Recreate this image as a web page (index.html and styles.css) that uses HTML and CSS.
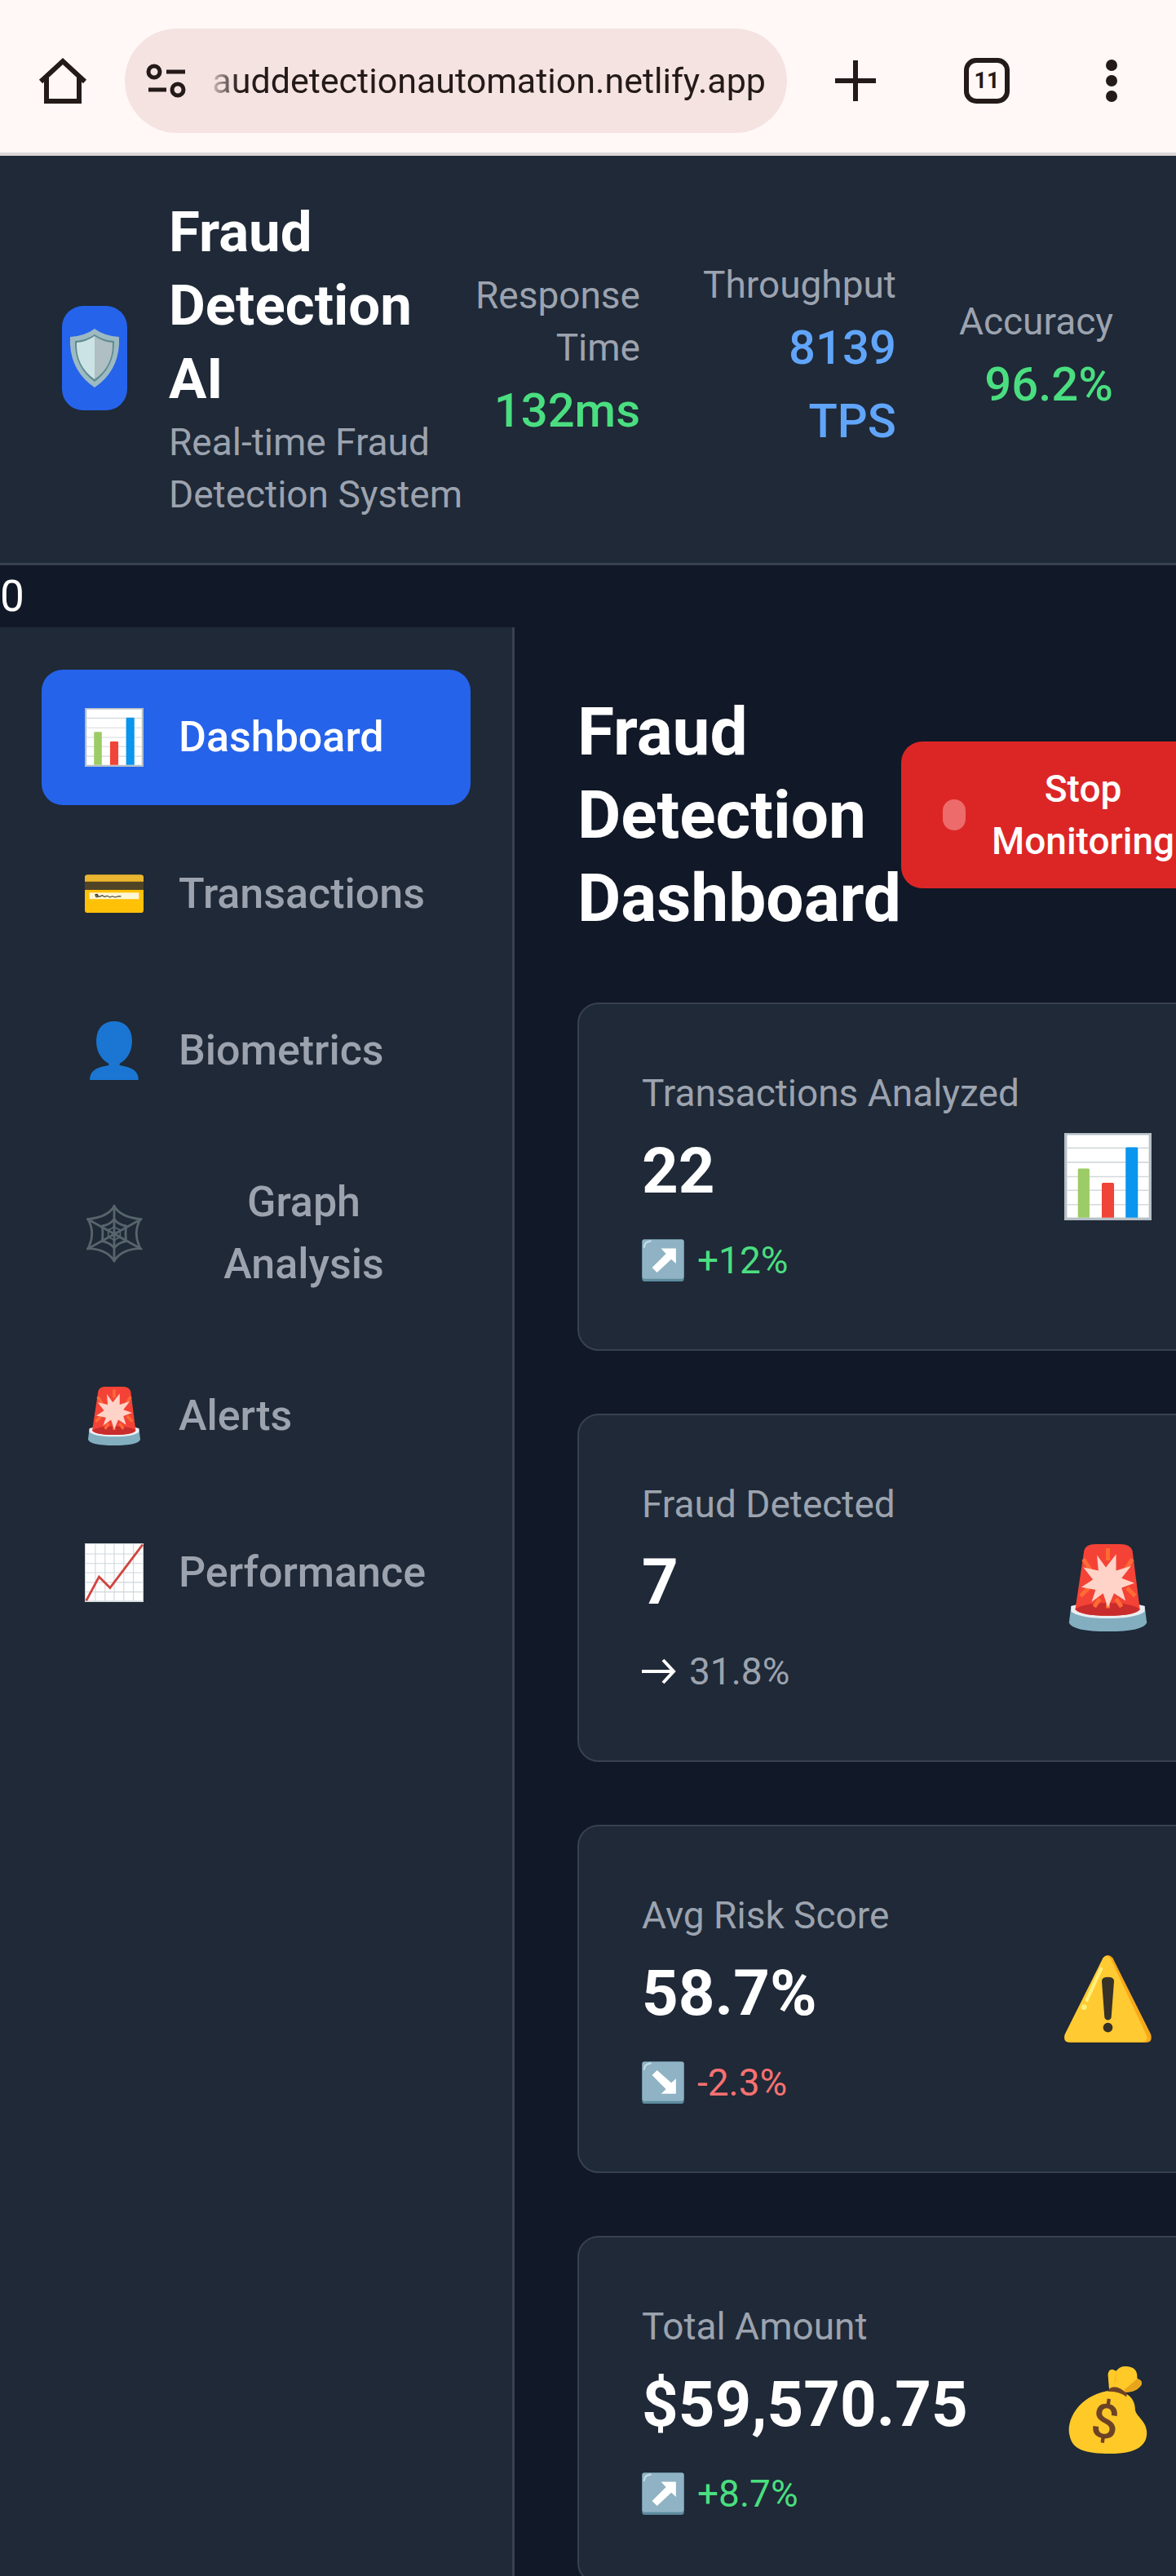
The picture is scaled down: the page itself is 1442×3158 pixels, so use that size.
FILE: index.html
```html
<!DOCTYPE html>
<html lang="en">
<head>
  <meta charset="UTF-8">
  <meta name="viewport" content="width=device-width, initial-scale=1.0">
  <title>Fraud Detection AI</title>
  <link rel="stylesheet" href="styles.css">
</head>
<body>
  <!-- Icon sprites -->
  <svg class="sprites" aria-hidden="true">
    <symbol id="i-bars" viewBox="0 0 128 128">
      <rect width="128" height="128" fill="#b4bfc6"/>
      <rect x="4" y="3" width="120" height="121" fill="#fff"/>
      <path d="M4 22h120M4 43h120M4 64h120M4 84h120M4 105h120" stroke="#d3d9dc" stroke-width="2"/>
      <path d="M20 54q0-2 2-2h13q2 0 2 2v70H20z" fill="#9ccc65"/>
      <path d="M55 75q0-2 2-2h14q2 0 2 2v49H55z" fill="#f04438"/>
      <path d="M90 23q0-2 2-2h14q2 0 2 2v101H90z" fill="#0a95ee"/>
    </symbol>
    <symbol id="i-card" viewBox="0 0 128 128">
      <rect y="22" width="128" height="83" rx="6" fill="#ffc107"/>
      <path d="M0 37v-9q0-6 6-6h116q6 0 6 6v9z" fill="#eab530"/>
      <rect y="37" width="128" height="18" fill="#504326"/>
      <rect x="10" y="61" width="108" height="14" fill="#fff6d6"/>
      <path d="M22 66q8-4 6 4q-5 2-4-4l8 4l6-3 5 3 6-2 6 3 5-2 7 2 5-2h7" fill="none" stroke="#3d3d35" stroke-width="2"/>
    </symbol>
    <symbol id="i-person" viewBox="0 0 128 128">
      <path d="M64 0c26 0 39 18 39 44 0 24-13 41-27 48v4c24 4 41 10 41 32H11c0-22 17-28 41-32v-4C38 85 25 68 25 44 25 18 38 0 64 0z" fill="#1a76d2"/>
    </symbol>
    <symbol id="i-web" viewBox="0 0 128 128">
      <g fill="none" stroke="#58646c" stroke-width="5" stroke-linejoin="round" stroke-linecap="round">
        <path d="M64 4v121M6 33l117 65M123 33L6 98"/>
        <path d="M64 5Q50 29 7 33Q24 64 7 97Q48 98 64 124Q80 98 121 97Q104 64 121 33Q78 29 64 5z"/>
        <path d="M64 33Q55 45 38 48Q40 64 38 81Q55 84 64 96Q73 84 90 81Q88 64 90 48Q73 45 64 33z"/>
        <path d="M64 49Q59 55 51 56v17q9 1 13 8q4-7 13-8V56Q69 55 64 49z" stroke-width="3"/>
      </g>
    </symbol>
    <symbol id="i-siren" viewBox="0 0 128 128">
      <path d="M10 91Q64 76 118 91L121 115Q116 128 64 128T7 115z" fill="#82aec0"/>
      <path d="M10 91Q64 76 118 91V99Q104 109 64 109T10 99z" fill="#e9eef2"/>
      <path d="M29 10Q31 0 46 0H82Q97 0 100 10L111 96Q104 105 64 105T16 96z" fill="#f44336"/>
      <path d="M16 95Q30 86 64 86T111 95Q104 105 64 105T16 95z" fill="#c92c2c"/>
      <path d="M64 24V6M64 82V94M40 40L28 22M88 40l12-18M36 64l-12 12M92 64l12 12M52 80l-8 12M76 80l8 12" stroke="#ff6a35" stroke-width="6"/>
      <path d="M64 93L57 72 40 85 46 67 25 63 42 52 28 34 50 39 48 16 61 34 76 15 76 39 98 32 84 50 103 57 84 64 90 83 73 72z" fill="#ffd3c8"/>
    </symbol>
    <symbol id="i-growth" viewBox="0 0 128 128">
      <rect width="128" height="128" fill="#cfd8dc"/>
      <rect x="2" y="2" width="124" height="123" fill="#fff"/>
      <path d="M23 2v123M44 2v123M64 2v123M85 2v123M106 2v123M2 23h124M2 44h124M2 64h124M2 85h124M2 106h124" stroke="#cfd8dc" stroke-width="2"/>
      <path d="M3 125L31 73L55 97L126 3" fill="none" stroke="#d0453f" stroke-width="5"/>
    </symbol>
    <symbol id="i-up" viewBox="0 0 128 128">
      <rect x="1" y="1" width="126" height="127" rx="6" fill="#5d8b9e"/>
      <rect x="1" y="1" width="126" height="119" rx="6" fill="#8fb3c4"/>
      <path d="M7 24Q8 8 26 6" fill="none" stroke="#c2dae5" stroke-width="6" stroke-linecap="round"/>
      <path d="M58 28h45v46L89 61 46 101 31 86 73 44z" fill="#fff"/>
    </symbol>
  </svg>

  <div class="browser-bar">
    <button class="bar-btn" aria-label="Home">
      <svg viewBox="0 0 64 64" fill="none" stroke="#231a19" stroke-width="6"><path d="M5 33L32 8L59 33M12 28V57H52V28"/></svg>
    </button>
    <div class="address">
      <svg viewBox="0 0 50 42" fill="none" stroke="#231a19" stroke-width="5"><circle cx="10" cy="10" r="7"/><path d="M25 10H48M3 32H25"/><circle cx="39" cy="32" r="7"/></svg>
      <input type="text" aria-label="Address" value="auddetectionautomation.netlify.app">
    </div>
    <div class="bar-actions">
      <button class="bar-btn new-tab" aria-label="New tab">
        <svg viewBox="0 0 64 64" stroke="#231a19" stroke-width="6"><path d="M32 7V57M7 32H57"/></svg>
      </button>
      <button class="bar-btn" aria-label="Open tabs"><span class="tab-count">11</span></button>
      <button class="bar-btn" aria-label="Menu">
        <svg viewBox="0 0 64 64" fill="#231a19"><circle cx="32" cy="13" r="7"/><circle cx="32" cy="32" r="7"/><circle cx="32" cy="51" r="7"/></svg>
      </button>
    </div>
  </div>

  <header class="header">
    <div class="brand">
      <div class="logo">
        <svg viewBox="0 0 60 72"><path d="M30 0Q42 9 60 10Q62 50 30 72Q-2 50 0 10Q18 9 30 0z" fill="#9dbac2"/><path d="M30 7Q40 14 54 15Q55 47 30 65Q5 47 6 15Q20 14 30 7z" fill="#5f8b8f"/><path d="M30 9Q40 16 52 17Q53 46 30 62z" fill="#b0bfc4"/><path d="M30 9Q20 16 8 17Q7 46 30 62z" fill="#cce3e6"/></svg>
      </div>
      <div>
        <h1>Fraud<br>Detection<br>AI</h1>
        <p class="muted">Real-time Fraud<br>Detection System</p>
      </div>
    </div>
    <div class="stats">
      <div class="stat">
        <div class="muted">Response<br>Time</div>
        <div class="stat-value green">132ms</div>
      </div>
      <div class="stat">
        <div class="muted">Throughput</div>
        <div class="stat-value blue">8139<br>TPS</div>
      </div>
      <div class="stat">
        <div class="muted">Accuracy</div>
        <div class="stat-value green">96.2%</div>
      </div>
    </div>
  </header>

  <div class="count">0</div>

  <div class="layout">
    <nav class="sidebar">
      <button class="nav-item active"><svg><use href="#i-bars"/></svg><span>Dashboard</span></button>
      <button class="nav-item"><svg><use href="#i-card"/></svg><span>Transactions</span></button>
      <button class="nav-item"><svg><use href="#i-person"/></svg><span>Biometrics</span></button>
      <button class="nav-item wrap"><svg><use href="#i-web"/></svg><span>Graph<br>Analysis</span></button>
      <button class="nav-item"><svg><use href="#i-siren"/></svg><span>Alerts</span></button>
      <button class="nav-item"><svg><use href="#i-growth"/></svg><span>Performance</span></button>
    </nav>

    <main class="main">
      <div class="page-head">
        <h2>Fraud<br>Detection<br>Dashboard</h2>
        <button class="stop-btn"><span class="dot"></span><span>Stop<br>Monitoring</span></button>
      </div>

      <section class="cards">
        <div class="card">
          <div>
            <div class="muted">Transactions Analyzed</div>
            <div class="card-value">22</div>
            <div class="trend green"><svg><use href="#i-up"/></svg>+12%</div>
          </div>
          <svg class="card-icon"><use href="#i-bars"/></svg>
        </div>
        <div class="card">
          <div>
            <div class="muted">Fraud Detected</div>
            <div class="card-value">7</div>
            <div class="trend muted"><svg class="flat" viewBox="0 0 42 50" fill="none" stroke="#fff" stroke-width="4"><path d="M0 25H39M26 11L39 25L26 39"/></svg>31.8%</div>
          </div>
          <svg class="card-icon"><use href="#i-siren"/></svg>
        </div>
        <div class="card">
          <div>
            <div class="muted">Avg Risk Score</div>
            <div class="card-value">58.7%</div>
            <div class="trend red">
              <svg viewBox="0 0 128 128">
                <rect x="1" y="1" width="126" height="127" rx="6" fill="#5d8b9e"/>
                <rect x="1" y="1" width="126" height="119" rx="6" fill="#8fb3c4"/>
                <path d="M7 24Q8 8 26 6" fill="none" stroke="#c2dae5" stroke-width="6" stroke-linecap="round"/>
                <path d="M58 98h45V52L89 65 46 27 31 42 73 84z" fill="#fff"/>
              </svg>-2.3%</div>
          </div>
          <svg class="card-icon" viewBox="0 0 128 128">
            <path d="M57 4Q64-4 71 4L127 116Q130 128 120 128H8Q-2 128 1 116z" fill="#f7a81b"/>
            <path d="M57 4Q63-3 68 5L121 118Q123 127 116 127H8Q-2 128 1 116z" fill="#ffca32"/>
            <path d="M54 20L33 66" stroke="#fff07a" stroke-width="5" stroke-linecap="round"/>
            <circle cx="29" cy="76" r="4" fill="#fff07a"/>
            <path d="M55 38q0-6 9-6t9 6L69 91q-1 4-5 4t-5-4z" fill="#363228"/>
            <circle cx="64" cy="106" r="7" fill="#363228"/>
          </svg>
        </div>
        <div class="card">
          <div>
            <div class="muted">Total Amount</div>
            <div class="card-value">$59,570.75</div>
            <div class="trend green"><svg><use href="#i-up"/></svg>+8.7%</div>
          </div>
          <svg class="card-icon" viewBox="0 0 128 128">
            <path d="M66 36L64 12Q66 0 76 7Q82-1 92 0Q108 1 107 18Q118 22 111 30Q104 38 90 38z" fill="#ffc928"/>
            <path d="M88 34Q99 26 107 18Q118 22 111 30Q104 38 90 38zM76 7q0 12-3 24" fill="#e8a51c"/>
            <path d="M64 36C20 44 2 80 8 102C12 122 30 128 68 128C106 128 122 116 121 96C120 80 106 74 104 64C104 52 98 42 86 38z" fill="#ffc928"/>
            <path d="M66 33Q76 25 92 40L91 45Q80 36 64 37z" fill="#6d4327"/>
            <text x="60" y="105" text-anchor="middle" transform="rotate(8 60 80)" class="bag-sign">$</text>
          </svg>
        </div>
      </section>
    </main>
  </div>
</body>
</html>
```

FILE: styles.css
```css
* { box-sizing: border-box; }
body { font-family: Roboto, sans-serif; font-size: 53px; line-height: 76px; margin: 0; height: 100vh; overflow: hidden; display: flex; flex-direction: column; background: #111827; color: #fff; }
h1, h2, p { margin: 0; }
button { font-family: inherit; border: none; padding: 0; background: none; cursor: pointer; }
svg { display: block; flex: none; }
.sprites { position: absolute; width: 0; height: 0; }
.bag-sign { font-family: Roboto, sans-serif; font-size: 70px; font-weight: 500; fill: #6d4327; }

.muted { color: #9ca3af; font-size: 46px; line-height: 64px; }
.green { color: #4ade80; }
.blue { color: #60a5fa; }
.red { color: #f87171; }

/* Browser bar */
.browser-bar { flex: none; display: flex; align-items: center; gap: 44px; padding: 35px 47px 24px 45px; background: #fff8f6; border-bottom: 4px solid #dcd6d7; }
.bar-btn { flex: none; width: 64px; height: 64px; display: flex; align-items: center; justify-content: center; }
.bar-btn svg { width: 64px; height: 64px; }
.bar-actions { display: flex; align-items: center; gap: 89px; }
.new-tab { width: 80px; }
.tab-count { width: 56px; height: 56px; color: #231a19; font-size: 27px; line-height: 44px; font-weight: 700; border: 6px solid #231a19; border-radius: 15px; }
.address { flex: 1; min-width: 0; height: 128px; display: flex; align-items: center; padding: 0 26px; gap: 24px; border-radius: 64px; background: #f5e3e1; }
.address svg { width: 50px; height: 42px; }
.address input { flex: 1; min-width: 0; border: none; padding: 0; background: none; outline: none; font-family: inherit; font-size: 43px; color: #231a19; text-align: right; -webkit-mask-image: linear-gradient(to right, transparent 0, #000 40px); mask-image: linear-gradient(to right, transparent 0, #000 40px); }

/* Header */
.header { flex: none; display: flex; justify-content: space-between; align-items: center; padding: 49px 77px 52px 76px; background: #1f2937; border-bottom: 3px solid #374151; }
.brand { display: flex; align-items: center; gap: 51px; }
.logo { width: 80px; height: 128px; display: flex; align-items: center; justify-content: center; border-radius: 26px; background: #2563eb; }
.logo svg { width: 60px; height: 72px; }
h1 { font-size: 69px; line-height: 90px; font-weight: 700; }
.stats { display: flex; align-items: center; gap: 77px; text-align: right; }
.stat-value { font-size: 58px; line-height: 90px; font-weight: 500; }
.count { flex: none; }

/* Sidebar */
.layout { flex: 1; min-height: 0; display: flex; }
.sidebar { flex: none; width: 631px; display: flex; flex-direction: column; gap: 26px; padding: 52px 51px; background: #1f2937; border-right: 3px solid #374151; }
.nav-item { display: flex; align-items: center; gap: 43px; min-height: 166px; padding: 39px 51px; border-radius: 26px; color: #9ca3af; font-size: 52px; line-height: 76px; font-weight: 500; }
.nav-item svg { width: 72px; height: 72px; margin-left: 2px; }
.nav-item.active { background: #2563eb; color: #fff; }
.nav-item.wrap span { flex: 1; }

/* Main */
.main { flex: 1 0 auto; padding: 77px; }
.page-head { display: flex; justify-content: space-between; align-items: center; margin-bottom: 77px; }
h2 { font-size: 82px; line-height: 102px; font-weight: 700; }
.stop-btn { display: flex; align-items: center; gap: 32px; padding: 26px 51px; border-radius: 26px; background: #dc2626; color: #fff; font-size: 46px; line-height: 64px; font-weight: 500; }
.dot { width: 28px; height: 38px; border-radius: 14px; background: #ee6b6b; }
.cards { display: grid; gap: 77px; }
.card { display: flex; justify-content: space-between; align-items: center; padding: 77px; background: #1f2937; border: 2px solid #374151; border-radius: 26px; }
.card-value { margin-top: 13px; font-size: 78px; line-height: 102px; font-weight: 700; }
.trend { display: flex; align-items: center; gap: 16px; margin-top: 26px; font-size: 46px; line-height: 64px; }
.trend svg { width: 52px; height: 52px; }
.trend .flat { width: 42px; }
.card-icon { width: 107px; height: 107px; }
```
